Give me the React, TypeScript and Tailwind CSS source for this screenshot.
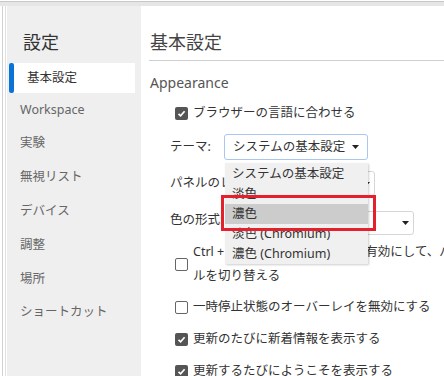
import React from 'react';

const font = { fontFamily: '"Noto Sans", "Noto Sans CJK JP", sans-serif' };

function Check({ checked }: { checked?: boolean }) {
  if (checked) {
    return (
      <span className="flex h-[13px] w-[13px] shrink-0 items-center justify-center rounded-[2px] bg-[#555]">
        <svg width="9" height="9" viewBox="0 0 9 9">
          <path d="M1.5 4.8 L3.6 6.8 L7.6 2.2" stroke="white" strokeWidth="1.7" fill="none" />
        </svg>
      </span>
    );
  }
  return <span className="h-[13px] w-[13px] shrink-0 rounded-[2px] border border-[#666] bg-white" />;
}

function Arrow() {
  return (
    <svg width="7" height="4" viewBox="0 0 7 4" className="shrink-0">
      <path d="M0 0 H7 L3.5 4 Z" fill="#222" />
    </svg>
  );
}

const navItems = ['Workspace', '実験', '無視リスト', 'デバイス', '調整', '場所', 'ショートカット'];
const themes = ['システムの基本設定', '淡色', '濃色', '淡色 (Chromium)', '濃色 (Chromium)'];

export default function App() {
  return (
    <div className="flex h-[376px] w-[444px] flex-col overflow-hidden bg-white text-[12.5px]" style={font}>
      <div className="h-px shrink-0 bg-white" />
      <div className="h-px shrink-0 bg-[#c8c8c8]" />
      <div className="h-[4px] shrink-0 bg-[#e6e6e6]" />
      <div className="flex min-h-0 flex-1">
        <div className="flex w-[7px] shrink-0">
          <div className="ml-[2px] w-px bg-[#d2d2d2]" />
          <div className="ml-[2px] w-px bg-[#e0e0e0]" />
        </div>

        {/* sidebar */}
        <div className="w-[134px] shrink-0 bg-[#efefef] pt-[24px]">
          <h1 className="pl-[16px] text-[18px] leading-[24px] text-[#333]">設定</h1>
          <div className="ml-[2px] mt-[9px] flex h-[30px] w-[126px] items-center bg-white">
            <span className="h-full w-[5px] rounded-[2px] bg-[#0a74d6]" />
            <span className="pl-[13px] text-[#333]">基本設定</span>
          </div>
          {navItems.map((item) => (
            <div key={item} className="flex h-[33.8px] items-center pl-[13px] text-[#666]">
              {item}
            </div>
          ))}
        </div>

        {/* main */}
        <div className="min-w-0 flex-1 overflow-hidden pt-[24px] text-[#333]">
          <h2 className="pl-[9px] text-[18px] leading-[24px] text-[#444]">基本設定</h2>
          <div className="ml-[8px] mt-[6px] h-px bg-[#cfcfcf]" />
          <div className="mt-[12px] pl-[9px] text-[14px] leading-[20px] text-[#555]">Appearance</div>

          <div className="mt-[4px] flex h-[33px] items-center gap-[5px] pl-[34px]">
            <Check checked />
            <span>ブラウザーの言語に合わせる</span>
          </div>

          <div className="flex h-[34px] items-center pl-[29px]">
            <span className="w-[54px]">テーマ:</span>
            <div className="relative">
              <div className="flex h-[26px] w-[144px] items-center justify-between rounded-[3px] border border-[#a9c6ee] bg-white pl-[8px] pr-[8px]">
                <span>システムの基本設定</span>
                <Arrow />
              </div>
              <div className="absolute left-[1px] top-[29px] z-10 w-[143px] bg-[#f0f0f0] shadow-[1px_1px_2px_rgba(0,0,0,0.2)]">
                {themes.map((t, i) => (
                  <div
                    key={t}
                    className={`flex h-[20px] items-center whitespace-nowrap pl-[7px] text-[#333] ${i === 2 ? 'bg-[#cccccc]' : ''} ${i === 0 ? 'mt-px' : ''}`}
                  >
                    {t}
                  </div>
                ))}
              </div>
              <div className="absolute left-[-3px] top-[61px] z-20 h-[36px] w-[155px] border-[3px] border-[#e3202b]" />
            </div>
          </div>

          <div className="flex h-[39px] items-center whitespace-nowrap pl-[29px]">
            <span>パネルのレイアウト:</span>
            <div className="ml-[5px] flex h-[25px] w-[84px] shrink-0 items-center justify-end rounded-[3px] border border-[#d6d6d6] bg-white pr-[4px]">
              <Arrow />
            </div>
          </div>

          <div className="flex h-[34px] items-center whitespace-nowrap pl-[29px]">
            <span>色の形式:</span>
            <div className="ml-[20px] mt-[5px] flex h-[24px] w-[171px] shrink-0 items-center justify-end rounded-[3px] border border-[#d6d6d6] bg-white pr-[4px]">
              <Arrow />
            </div>
          </div>

          <div className="flex h-[54px] items-center gap-[5px] whitespace-nowrap pl-[34px]">
            <Check />
            <div className="leading-[24px]">
              <div>Ctrl + Shift + P キーでの表示を有効にして、パネ</div>
              <div>ルを切り替える</div>
            </div>
          </div>

          <div className="flex h-[32px] items-center gap-[5px] whitespace-nowrap pl-[34px]">
            <Check />
            <span>一時停止状態のオーバーレイを無効にする</span>
          </div>

          <div className="flex h-[32px] items-center gap-[5px] whitespace-nowrap pl-[34px]">
            <Check checked />
            <span>更新のたびに新着情報を表示する</span>
          </div>

          <div className="flex h-[32px] items-center gap-[5px] whitespace-nowrap pl-[34px]">
            <Check checked />
            <span>更新するたびにようこそを表示する</span>
          </div>
        </div>
      </div>
    </div>
  );
}
